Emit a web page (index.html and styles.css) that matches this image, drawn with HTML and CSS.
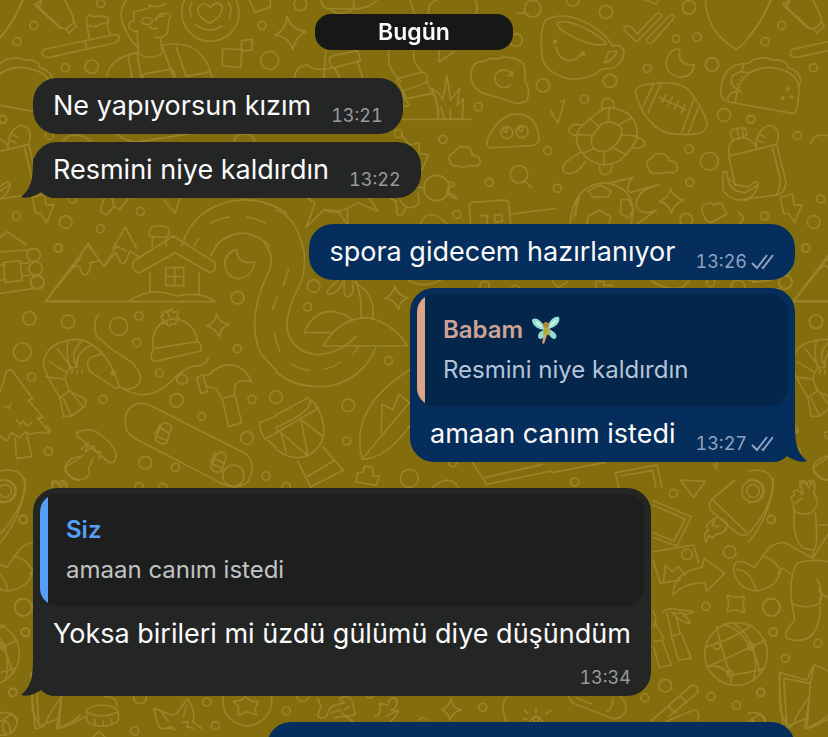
FILE: index.html
```
<!DOCTYPE html>
<html lang="tr">
<head>
    <meta charset="UTF-8">
    <meta name="viewport" content="width=device-width, initial-scale=1.0">
    <title>Babam</title>
    <link rel="stylesheet" href="styles.css">
</head>
<body>
    <svg class="wallpaper" aria-hidden="true">
        <defs>
            <pattern id="doodles" width="748" height="760" patternUnits="userSpaceOnUse" viewBox="0 0 2244 2280">
                <g id="sheet">
                    <!-- top left: tube, toothbrush, man with glasses, badge -->
                    <g>
                        <path d="M70-10Q50 60 0 112M125 0L105 15 178 83 197 87 222 68 218 48 190-10M125 0L118 20M197 87L207 99 229 79 222 68"/>
                        <path d="M138 147L335 105Q352 100 358 112 358 125 343 129L148 172Q131 175 126 160 125 150 138 147ZM255 122L260 147M268 117L260 72Q258 52 268 44L278 50Q306 44 322 53 331 62 320 70L331 104M267 77Q284 84 302 72L325 68"/>
                        <path d="M382-5Q350 40 373 82 391 123 413 142M400 36Q404 58 400 63 383 65 388 83 397 98 411 92L416 160Q449 184 486 160L482 114M464 112Q500 116 504 91L507 57Q514 52 510 42L489 40Q470 46 466 60M400 36L448 24 448 16Q470 27 499 10M425 62Q436 44 458 60 456 76 438 73 423 71 425 62ZM466 62Q472 47 490 49M448 80Q458 91 472 84M411 158Q332 173 320 228M385 170L397 238M411 158L424 234M486 136Q600 114 631 215L558 229 528 140M486 136L520 230M428 232Q426 223 440 220L510 208Q522 207 527 235M588 224L631 215 637 235"/>
                        <circle cx="631" cy="38" r="86"/><path d="M630 70Q590 50 594 26 604 0 631 22 655-2 666 20 670 48 630 70ZM574 50Q565 20 576 8M588 74Q626 105 665 78M688 54Q699 22 684 6M668 145L726 149 722 203 666 197ZM724 122L757 118 756 150 724 153ZM746-5L765 37 811 22V-5"/>
                        <circle cx="302" cy="10" r="12"/><circle cx="101" cy="76" r="12"/><circle cx="51" cy="125" r="12"/><circle cx="196" cy="203" r="12"/><circle cx="275" cy="200" r="20"/><circle cx="786" cy="76" r="12"/><circle cx="809" cy="181" r="27"/>
                        <circle cx="9" cy="358" r="11"/><circle cx="148" cy="407" r="12"/><circle cx="218" cy="597" r="12"/><circle cx="421" cy="634" r="12"/><circle cx="49" cy="648" r="12"/><circle cx="197" cy="666" r="19"/><circle cx="301" cy="686" r="12"/>
                        <path d="M190 432Q190 404 230 405 270 410 284 440M350 402Q385 430 420 425L590 398M704 440Q696 403 735 400 766 405 765 436M315 590L302 625Q305 645 320 644L342 620 360 628 388 590M335 590L342 620M492 600L525 640 540 595M545 738Q580 625 700 602 790 590 860 640M630 671Q655 656 687 651M740 651Q770 655 795 670M582 738L595 716M645 738Q690 695 740 700 780 710 810 738"/>
                        <!-- cabin roof and peaks -->
                        <path d="M0 712L22 695 80 735M255 745L265 730 272 745M338 745L376 682 410 745M448 702Q448 678 468 678H490Q508 681 508 700 508 711 492 711H465Q448 711 448 702ZM457 712V740M498 712V738"/>
                    </g>
                    <!-- top middle: runner, grass, cloud, ghost -->
                    <g transform="translate(828 0)">
                        <path d="M33 50Q45 88 90 95 60 105 50 150 40 110-3 105 30 90 33 50ZM133-5Q140 25 155 26H248Q290 20 306-5M164 26Q178 50 226 32 240 16 230-5M400-5L416 44M458 44Q453-5 510-5M600 40Q610 10 592-5M745 38L722 41"/>
                        <path d="M150 150L142 238M160 180Q160 168 175 166L245 152 254 182 172 204Q162 194 160 180ZM178 206L190 234M245 186L260 235M55 235Q60 195 95 195 110 210 145 208L172 203 190 228"/>
                        <path d="M338 150V190Q350 220 374 244M413 150V180L438 218M365 246Q355 240 372 234L440 216Q456 220 453 243 440 256 380 272ZM382 273L390 296 470 280 453 245M470 280Q487 300 486 356M380 273V320L400 316Q388 295 370 285M487 356V328L470 266Q494 282 500 300L513 228 524 300 551 265 543 315 562 297 559 356M505 356L495 320M523 356V330M370 358H584M490 153L488 186 535 155"/>
                        <path d="M585 220Q590 180 626 185 640 170 662 178 700 160 742 190 750 215 747 244 765 270 753 302 730 318 690 300L615 277Q582 255 585 220ZM704 254Q688 270 669 258 650 242 660 222 674 203 700 215L711 226M696 226L711 226 708 213"/>
                        <path d="M640 444Q630 434 634 420 660 355 710 343 765 338 782 382 794 415 788 424 780 436 765 437Z"/><circle cx="692" cy="398" r="18"/><circle cx="738" cy="395" r="18"/><circle cx="688" cy="390" r="6"/><circle cx="734" cy="387" r="6"/>
                        <path d="M524 490Q510 465 536 456 548 432 580 444 590 455 588 466 612 463 613 490 604 503 584 496 560 507 545 497 530 500 524 490ZM745 543L767 563"/><circle cx="729" cy="523" r="26"/>
                        <path d="M375 402L402 435 428 428 430 460 457 464 438 510M520 545Q540 548 532 560L518 560 512 577Q535 600 542 595 536 580 515 580M440 562H420M345 596L360 602 363 640Q375 662 390 622M368 590Q388 640 425 615 433 598 425 580"/><circle cx="482" cy="564" r="38"/>
                        <path d="M97 595L117 610 90 682 144 629 186 634 215 674 214 630M144 629Q180 650 245 608L306 633 278 592M0 630Q60 650 80 740M433 672Q455 615 514 672M584 672L580 620Q580 608 590 607L684 600Q697 600 698 612L704 672M610 648L634 646V670M655 646L678 643 680 664 658 667ZM706 642L840 625"/>
                        <circle cx="73" cy="13" r="19"/><circle cx="770" cy="26" r="25"/><circle cx="720" cy="120" r="19"/><circle cx="801" cy="256" r="20"/><circle cx="607" cy="320" r="12"/><circle cx="367" cy="401" r="12"/><circle cx="501" cy="418" r="12"/><circle cx="815" cy="452" r="12"/><circle cx="640" cy="547" r="12"/><circle cx="542" cy="643" r="12"/>
                    </g>
                    <!-- top right: teacup, ticks, football, taco, turtle, lunch bag -->
                    <g transform="translate(1656 0)">
                        <path d="M-20 60Q30 35 90 62 155 90 182 138 210 130 217 158 210 195 180 205L150 207Q105 245 45 235-10 220-28 180-40 100-20 60ZM15 70Q30 55 90 80 150 110 164 132 130 140 90 122 20 95 15 70ZM12 140Q20 180 50 182 75 180 85 165M170 155L194 153Q190 178 158 188Z"/>
                        <circle cx="93" cy="161" r="7" class="dot"/><circle cx="9" cy="125" r="7" class="dot"/>
                        <path d="M226 78Q240 78 255 103L312 42Q325 35 330 48L260 120Q252 130 240 112L216 90Q216 78 226 78ZM358 42Q370 45 365 55L302 127Q288 135 282 120ZM372 147Q385 145 383 156 378 188 410 194L427 195Q420 235 378 231 340 220 342 185 348 155 372 147Z"/>
                        <path d="M250 275Q253 260 275 255 390 235 418 280 455 330 466 372 464 393 440 400 340 415 300 370 260 330 250 275ZM304 254L273 320M327 250L288 338M425 297L388 402M438 325L408 402M322 292L402 330M343 282L330 306M362 290L348 318M380 302L367 328M398 315L387 340"/>
                        <path d="M460-5Q462 95 552 148 600 120 660-5M692 10L770 83M270-5L312 12 322-5"/>
                        <path d="M520 302Q500 290 509 250 520 190 590 190 606 174 625 176 638 168 660 180 680 175 704 190L707 203Q740 210 746 240 745 250 742 255M550 305Q560 205 650 202 735 208 741 265 738 345 720 340L530 306Q522 293 535 283 550 270 556 280M568 275Q530 260 540 230 560 210 590 218M576 192L567 215"/>
                        <circle cx="707" cy="267" r="6" class="dot"/><circle cx="692" cy="295" r="6" class="dot"/><circle cx="718" cy="290" r="6" class="dot"/><circle cx="560" cy="240" r="3" class="dot"/><circle cx="569" cy="232" r="3" class="dot"/><circle cx="556" cy="253" r="3" class="dot"/>
                        <path d="M142 335Q170 310 220 337 260 360 255 415 240 450 200 484 150 510 100 470 60 425 80 390 105 360 142 335ZM148 372Q180 355 208 385 215 415 180 444 150 465 125 445 108 420 130 395ZM150 328Q145 295 168 295 190 300 185 325M172 324L168 367M235 356L198 375M253 408L212 405M224 465L184 444M155 498L157 456M94 459L127 445M77 403L120 407M112 354L143 382M88 375Q60 368 50 388 55 410 78 405M250 412Q280 415 277 435 265 450 240 442M88 455L50 480Q20 505 40 518 70 530 100 485M143 498Q140 525 162 525 180 520 180 492"/>
                        <path d="M290 508Q275 485 300 473 310 455 340 463 350 475 352 482 380 485 376 510 365 525 345 515 325 525 315 518 295 525 290 508ZM530 468L674 433 702 545Q700 575 680 584L560 600M530 468L550 558M660 437L685 540Q685 565 675 582M533 468Q520 420 568 413 600 415 614 442M612 442Q612 390 650 376 690 380 674 432M535 395Q540 385 550 388 562 380 580 385L585 405 558 418 540 415ZM555 388L560 410M570 384L575 408M624 402L640 412M620 422L636 428M512 516L524 515 526 530Q545 560 590 560 610 540 618 548 620 575 585 600 535 605 513 570ZM526 530Q530 575 580 578L615 556"/>
                        <path d="M155 548Q60 560 55 672M170 550L244 532Q215 565 235 578 280 565 322 554 250 570 253 620 270 650 313 630L258 670M155 548Q235 555 244 630L238 672M108 572L145 556 177 572 170 590 125 592ZM65 650L82 595 72 610V640ZM208 600L230 598 243 628 232 655 205 640ZM105 670L108 648 142 630 176 650 172 670M356 566Q365 595 396 600 365 612 358 640 350 610 322 604 350 595 356 566ZM450 632Q445 615 465 612 475 605 484 614L508 608 525 642 475 668Q458 665 450 632ZM560 638Q575 650 574 658L565 670"/>
                        <path d="M685 592L722 582 726 615 750 614 728 668 710 640 695 640ZM25 305L38 300 18 370-5 330"/>
                        <circle cx="62" cy="0" r="19"/><circle cx="162" cy="36" r="20"/><circle cx="411" cy="22" r="20"/><circle cx="372" cy="116" r="11"/><circle cx="435" cy="111" r="12"/><circle cx="480" cy="193" r="20"/><circle cx="286" cy="205" r="12"/><circle cx="174" cy="243" r="20"/><circle cx="97" cy="297" r="12"/><circle cx="516" cy="345" r="20"/><circle cx="596" cy="358" r="12"/><circle cx="411" cy="447" r="12"/><circle cx="472" cy="484" r="27"/><circle cx="413" cy="547" r="12"/><circle cx="403" cy="659" r="19"/><circle cx="16" cy="565" r="12"/>
                    </g>
                    <!-- middle left: mountains, cabin, shrimp, hat, hammer, tree, mushroom, snowboard -->
                    <g transform="translate(0 738)">
                        <path d="M135 167L265-5 312 62 350 0 378 15M215 65Q235 55 240 65 245 90 260 85 275 70 270 50L300 45 312 62 328 40 350 20Q360 60 375 50L390 15 420 35M135 167H645M388 165Q450 120 530 150 610 135 645 167M450 80V137M597 80V143M402 45L520-30 645 50Q650 75 630 80L525 20 418 80Q390 75 402 45ZM497 65H551V119H497ZM524 65V119M497 92H551M632 30L655-10"/>
                        <path d="M0 18L82 12M0 58L15 57M0 103L18 102M0 142L98 128M10 50L60 44 67 103 15 109ZM65 52L88 50M65 90L92 88"/><circle cx="101" cy="27" r="20"/><circle cx="107" cy="68" r="20"/><circle cx="112" cy="108" r="20"/>
                        <path d="M710 10Q675 20 674 55 680 95 718 98 760 90 763 48L740 50Q710 45 710 10ZM795-5Q830 35 800 90 740 220 780 320L830 375M650 205Q655 230 688 234 660 245 658 272 645 245 620 240 645 230 650 205Z"/>
                        <path d="M180 455Q120 360 132 340 150 280 240 280 310 300 345 385L358 422 348 428 272 378Q250 350 278 332L302 325M180 455L208 435 195 400Q200 360 230 365M180 455L190 512 215 510 255 480 258 460 208 435M190 458L214 509M215 440L248 482M137 392L195 400M148 347L200 380M172 308L215 365M205 288Q195 320 210 365M248 284Q205 320 230 360M275 298Q225 320 232 362M218 372L215 382M232 374L230 384M245 372L247 380M297 203Q275 230 290 270 330 310 390 345 435 385 415 415 390 440 358 422M358 422Q440 475 510 410 560 355 600 360 620 350 625 335M530 405Q530 385 548 385 570 395 560 410 540 420 530 405"/><circle cx="339" cy="381" r="8" class="dot"/>
                        <path d="M460 308Q450 230 520 218 585 225 592 288M460 308L590 287Q608 290 603 315L465 346Q450 345 455 320ZM510 213Q490 185 510 195 515 180 520 200 540 190 530 210 545 220 528 222 530 240 515 232 505 250 500 230 480 240 490 220 475 210 490 208 480 190 500 200"/>
                        <path d="M590 394L610 387 622 436 603 443ZM613 388L630 385Q660 350 705 358 740 370 754 408 710 395 704 425V445L725 530 686 542 666 458 650 430 620 420M666 458L703 447"/>
                        <path d="M0 440L20 375Q30 365 40 378L98 458 85 462 130 515 112 515 150 560 108 560 92 565 75 558 60 575 35 560 20 585 0 570M15 480L25 488 32 475M48 520L60 535 70 525 80 540 95 530M45 575L50 637 96 632 80 565"/>
                        <path d="M230 560Q270 540 300 565 350 600 348 635 345 655 325 648L250 585Q225 570 230 560ZM250 628L195 665Q210 705 240 702 280 690 265 670L280 635M243 610L265 590 255 618 280 600 290 620 300 615 298 640"/>
                        <path d="M380 500Q400 460 450 478L740 625Q770 655 745 705 715 735 670 715L400 575Q365 550 380 500ZM485 535Q500 525 515 540L500 590Q480 600 466 580ZM480 545L505 560M470 570L498 583M465 565L480 535M650 625Q665 610 680 628L665 675Q645 685 632 665ZM645 638L670 650M640 655L665 665M632 650L645 620M155 725Q160 700 175 715 185 690 200 725M0 675Q75 660 75 725 60 820 0 890M0 702Q45 700 45 740 35 770 0 770"/>
                        <path d="M780 530L830 510M780 530Q775 545 795 580L830 560M805 583L828 605"/>
                        <circle cx="174" cy="6" r="12"/><circle cx="88" cy="217" r="20"/><circle cx="204" cy="227" r="20"/><circle cx="356" cy="241" r="27"/><circle cx="417" cy="210" r="12"/><circle cx="410" cy="290" r="12"/><circle cx="713" cy="155" r="19"/><circle cx="712" cy="308" r="12"/><circle cx="67" cy="318" r="27"/><circle cx="95" cy="393" r="12"/><circle cx="478" cy="381" r="12"/><circle cx="309" cy="460" r="12"/><circle cx="530" cy="463" r="20"/><circle cx="605" cy="511" r="12"/><circle cx="756" cy="460" r="12"/><circle cx="741" cy="576" r="19"/><circle cx="145" cy="616" r="12"/><circle cx="436" cy="650" r="19"/><circle cx="526" cy="664" r="12"/><circle cx="798" cy="690" r="12"/><circle cx="417" cy="722" r="12"/><circle cx="488" cy="724" r="12"/>
                    </g>
                    <!-- middle: road, palm island, drum, surfboard -->
                    <g transform="translate(828 738)">
                        <path d="M78-5Q95 40 75 110 25 200 35 260 60 325 130 326 200 318 240 270M0 378Q60 430 160 420 260 400 300 305M38 70L22 118M5 150L-10 190M-5 260Q0 290 12 318M48 355Q70 370 98 373M145 369Q175 363 192 348M230 325L248 303"/>
                        <path d="M85 260Q110 195 170 196 215 205 230 222M85 260H165M142 300Q190 215 275 215 350 230 395 300ZM240 105Q260 160 255 215M228 105Q300 140 290 215M185 105Q140 140 160 145 190 140 200 105M205 105Q200 150 215 152 235 150 230 115M395 102Q445 130 495 102M357 120Q365 150 396 155 370 165 368 190 355 160 326 158 350 148 357 120Z"/>
                        <path d="M0 507L95 455 120 475 122 490 0 560M100 460Q120 490 0 545M125 485Q165 570 120 610 70 660 0 610M0 548L95 628 75 520 138 570M15 560L30 620M65 645L105 725M140 602L202 673 105 722M88 695L172 645"/>
                        <path d="M405 370Q220 480 258 640 330 640 405 535M258 640L400 470 370 445 350 490 318 475 316 560M245 680L262 678 265 660 290 665 292 690 310 690 300 718 240 708ZM470 725Q520 680 548 725M590 650L632 715 825 675M625 695L800 655"/>
                        <circle cx="113" cy="120" r="19"/><circle cx="95" cy="183" r="12"/><circle cx="337" cy="344" r="12"/><circle cx="0" cy="453" r="19"/><circle cx="217" cy="478" r="19"/><circle cx="212" cy="585" r="12"/><circle cx="400" cy="697" r="27"/><circle cx="31" cy="722" r="12"/><circle cx="626" cy="120" r="14"/><circle cx="718" cy="128" r="11"/><circle cx="530" cy="652" r="11"/>
                    </g>
                    <!-- between the bubbles, right -->
                    <g transform="translate(1656 738)">
                        <path d="M0 105L20 125 45 108M132 125V106H155V118H182M300 105Q340 135 390 125L410 105M725 165L830 35M725 165H830M0 680L158 650M190 680L315 657 330 725M205 690L302 673 312 725M190 680L200 725M385 702L460 706 425 755ZM485 655L493 668 495 650M730 540L740 552 730 562"/>
                        <circle cx="762" cy="6" r="12"/><circle cx="700" cy="109" r="20"/><circle cx="476" cy="110" r="12"/><circle cx="558" cy="122" r="20"/><circle cx="68" cy="708" r="12"/>
                        <path d="M830 630Q780 640 784 675 800 700 830 702"/>
                    </g>
                    <!-- bottom left -->
                    <g transform="translate(0 1440)">
                        <path d="M95 640L105 745Q135 750 145 710L180 655M185 650L170 745Q180 750 255 710M95 575V600M313 650Q355 650 350 680M260 690Q275 675 310 675 355 680 355 700V720Q340 740 300 738 260 735 260 715ZM260 695Q300 720 355 695M285 718V735M310 722V738M335 718V732M520 745L480 745Q465 710 462 685L515 705 530 700 563 655Q590 700 578 725L605 745M480 690L505 725M560 675L550 710M500 745Q515 735 525 750M545 728L565 725 560 740 580 745M0 700Q25 690 52 715 50 770 0 765M15 760Q0 740 15 720 35 740 30 760M280 770L295 755 315 770"/>
                        <path d="M670 650Q660 720 740 740 820 725 815 650M735 650L755 665 775 665 765 685 770 705 740 695 715 705 715 680 700 665 725 660Z"/>
                        <circle cx="69" cy="118" r="12"/><circle cx="70" cy="382" r="26"/><circle cx="76" cy="457" r="12"/><circle cx="38" cy="637" r="12"/><circle cx="420" cy="652" r="19"/><circle cx="621" cy="666" r="12"/><circle cx="646" cy="737" r="12"/><circle cx="404" cy="753" r="12"/><circle cx="700" cy="-13" r="32"/>
                    </g>
                    <!-- strip under the last received message -->
                    <g transform="translate(828 1440)">
                        <path d="M125 655L135 680 125 705Q130 720 150 710L165 680 205 668 190 655 215 648 228 660M228 668L238 700Q225 715 205 705L190 690 165 700M205 690L220 680M175 715Q205 700 230 725M295 710Q320 705 310 670L335 675Q340 650 360 655 370 680 345 690L368 695 345 725M330 710L365 690M525 655Q530 685 555 690 530 695 522 720 515 695 497 690 520 680 525 655ZM695 650Q670 670 690 725M745 690L755 700M780 685V698M825 690L810 702M762 725Q780 695 800 725M740 715L752 718M430 720Q440 705 455 720"/>
                        <circle cx="780" cy="718" r="8"/><circle cx="31" cy="693" r="12"/><circle cx="80" cy="645" r="19"/><circle cx="620" cy="682" r="12"/><circle cx="282" cy="643" r="11"/>
                    </g>
                    <!-- bottom right: rocket, frames, arrow, bamboo, ball, book -->
                    <g transform="translate(1656 1440)">
                        <path d="M548 0L478 60Q465 75 480 95L558 162Q580 172 595 155 665 75 664-5M484 62L582 155M523 125Q530 150 505 160 490 160 482 175L470 165 463 187Q450 160 470 150L463 140Q490 100 515 120M488 120L480 135 500 140M303 62L418 110 375 198 303 172M303 75L400 118 365 183 303 158"/><circle cx="603" cy="33" r="33"/><circle cx="603" cy="33" r="19"/>
                        <path d="M303 215L425 195 440 250M303 240L325 310 385 300M335 305L340 255 360 275 380 260 400 285M363 345Q365 275 450 262L457 235 518 280 465 333 458 310Q400 305 363 345ZM525 345L550 352 578 350 573 372 578 398 550 390 525 395 530 370Z"/><circle cx="405" cy="223" r="16"/>
                        <path d="M545 275Q540 240 572 245L608 262 650 205Q675 185 700 188L782 235M545 275Q560 330 615 333 680 320 685 270 665 235 630 228M553 268Q595 270 612 330M678 280L692 265 715 280M719 60Q715 50 728 45 720 30 735 30 750 35 748 45L755 40 742 8Q752-5 763 8L770 25 780 0Q795 5 785 38 800 60 795 75 780 110 745 100 720 100 725 65M732 70Q740 60 750 55M727 90Q720 180 755 205L785 210Q800 200 790 100M800 135H830M785 210L782 235 830 160M830 245Q770 235 735 250 710 290 720 370L728 420Q690 465 705 475 740 490 775 470 805 440 805 380M724 372Q760 390 805 370L808 350M795 300Q815 330 803 360M830 355Q810 345 800 330"/>
                        <path d="M303 390L312 415 305 440M305 485L330 480 358 555 322 563 305 500M332 395Q350 382 372 388L425 395 395 408M345 398L360 468 385 462 372 410M360 398Q390 430 415 430L395 400ZM358 470L380 540 417 535 390 463M310 430L335 475"/>
                        <circle cx="552" cy="522" r="94"/><path d="M495 440Q500 480 535 585 540 610 535 614M463 500Q540 480 600 435M470 558Q560 520 640 480M515 432Q600 460 625 580M545 430Q630 490 605 600M467 560Q500 550 535 585 590 580 635 565"/><circle cx="495" cy="498" r="10"/><circle cx="597" cy="500" r="10"/><circle cx="534" cy="581" r="10"/>
                        <path d="M682 578L765 600 785 555Q810 560 830 575M682 578L685 690 705 738 695 595 775 610 785 560M775 605L765 745Q800 730 830 705M705 738L765 715M295 725L420 615Q440 615 437 637L350 710M350 680L370 700M385 648L405 668M340 725L425 690Q445 695 438 720M50 650L60 668 180 715Q210 720 222 690 225 665 205 650M182 655Q185 680 165 695M75 655L120 672M590 725L625 700 640 725"/>
                        <circle cx="364" cy="40" r="12"/><circle cx="658" cy="119" r="12"/><circle cx="533" cy="216" r="19"/><circle cx="462" cy="379" r="12"/><circle cx="658" cy="382" r="26"/><circle cx="664" cy="456" r="12"/><circle cx="700" cy="535" r="12"/><circle cx="340" cy="617" r="19"/><circle cx="278" cy="653" r="12"/><circle cx="477" cy="649" r="12"/><circle cx="553" cy="676" r="12"/><circle cx="626" cy="637" r="12"/><circle cx="798" cy="490" r="12"/>
                    </g>
                </g>
                <use href="#sheet" x="-2244"/>
            </pattern>
            <symbol id="ticks" viewBox="0 0 24 16">
                <path d="M1 9L6 14 16 1M11 13L12 14 22 1"/>
            </symbol>
            <symbol id="tail" viewBox="0 0 34 40">
                <path d="M12 0C12 20 11 30 0 39 7 41 14 38 20 34 24 38 29 40 34 40V0Z"/>
            </symbol>
        </defs>
        <rect width="100%" height="100%" fill="url(#doodles)"/>
    </svg>

    <main class="chat">
        <div class="date">Bugün</div>

        <article class="bubble in">
            <p class="line"><span class="text">Ne yapıyorsun kızım</span><time>13:21</time></p>
        </article>
        <article class="bubble in">
            <p class="line"><span class="text">Resmini niye kaldırdın</span><time>13:22</time></p>
            <svg class="tail"><use href="#tail"/></svg>
        </article>

        <article class="bubble out first">
            <p class="line"><span class="text">spora gidecem hazırlanıyor</span><time>13:26</time><svg class="ticks" aria-label="iletildi"><use href="#ticks"/></svg></p>
        </article>
        <article class="bubble out">
            <blockquote class="quote">
                <strong>Babam
                    <svg class="fairy" viewBox="0 0 30 30" aria-hidden="true">
                        <path fill="#8fe0d2" d="M15 15C10 3 3 2 1 5 1 10 6 14 13 15 6 17 6 23 9 24 13 24 15 19 16 15 18 22 23 26 25 23 27 19 22 16 18 14 25 12 30 7 28 2 23 0 17 7 15 15Z"/>
                        <path fill="#c9f3e6" d="M4 6Q9 7 12 12 6 12 4 6ZM26 4Q20 7 18 12 25 10 26 4Z"/>
                        <circle cx="15" cy="10" r="3" fill="#b5803a"/>
                        <path fill="#a9b13c" d="M13 12L18 13 19 20 12 20Z"/>
                        <path fill="#d59a80" d="M13 19L16 20 13 29 11 28ZM17 12L20 17 17 18Z"/>
                    </svg>
                </strong>
                <p>Resmini niye kaldırdın</p>
            </blockquote>
            <p class="line"><span class="text">amaan canım istedi</span><time>13:27</time><svg class="ticks" aria-label="iletildi"><use href="#ticks"/></svg></p>
            <svg class="tail"><use href="#tail"/></svg>
        </article>

        <article class="bubble in first">
            <blockquote class="quote">
                <strong>Siz</strong>
                <p>amaan canım istedi</p>
            </blockquote>
            <p class="line wrap"><span class="text">Yoksa birileri mi üzdü gülümü diye düşündüm</span><time>13:34</time></p>
            <svg class="tail"><use href="#tail"/></svg>
        </article>

        <article class="bubble out first next"></article>
    </main>
</body>
</html>
```
FILE: styles.css
```
* { margin: 0; padding: 0; box-sizing: border-box; }
body { background: #836d0c; font-family: Inter, "Noto Sans", sans-serif; color: #fafafa; }

.wallpaper { position: fixed; top: 0; left: 0; width: 100%; height: 100%; fill: none; stroke: #9a832b; stroke-width: 5; stroke-linecap: round; stroke-linejoin: round; }
.wallpaper rect { stroke: none; }
.wallpaper .dot { fill: #9a832b; stroke: none; }

.chat { position: relative; height: 100vh; overflow: hidden; padding: 14px 33px 0; display: flex; flex-direction: column; align-items: flex-start; gap: 8px; }
.date { align-self: center; width: 198px; margin-bottom: 20px; border-radius: 16px; background: #171717; text-align: center; font-size: 23px; font-weight: 600; line-height: 36px; }

.bubble { position: relative; flex-shrink: 0; border-radius: 24px; }
.in { background: #242626; --quote: #1d1f1f; --accent: #559ff8; --muted: #c2c3c3; --meta: #999b9b; }
.out { align-self: flex-end; background: #062e5c; --quote: #04264a; --accent: #dda288; --name: #cfa296; --muted: #b5c4da; --meta: #8fa3c0; }
.first { margin-top: 18px; }
.next { width: 528px; height: 56px; }

.line { display: flex; align-items: flex-end; padding: 0 20px; }
.text { font-size: 27px; line-height: 56px; white-space: nowrap; }
time { margin: 0 0 7px 20px; color: var(--meta); font-size: 18px; line-height: 22px; font-variant-numeric: tabular-nums; }
.ticks { width: 24px; height: 16px; margin: 0 0 10px 4px; fill: none; stroke: var(--meta); stroke-width: 2; }
.wrap { flex-direction: column; }
.wrap .text { margin-bottom: 5px; }

.quote { position: relative; overflow: hidden; margin: 0 7px; padding: 16px 26px; border-radius: 18px; background: var(--quote); color: var(--muted); font-size: 24px; line-height: 40px; }
.bubble:has(.quote) { padding-top: 6px; }
.quote::before { content: ""; position: absolute; top: 0; bottom: 0; left: 0; width: 8px; background: var(--accent); }
.quote strong { display: flex; align-items: center; gap: 8px; color: var(--name, var(--accent)); font-weight: 600; }
.fairy { width: 30px; height: 30px; }

.tail { position: absolute; left: -12px; bottom: 0; width: 34px; height: 40px; fill: #242626; }
.out .tail { left: auto; right: -12px; fill: #062e5c; transform: scaleX(-1); }
```
